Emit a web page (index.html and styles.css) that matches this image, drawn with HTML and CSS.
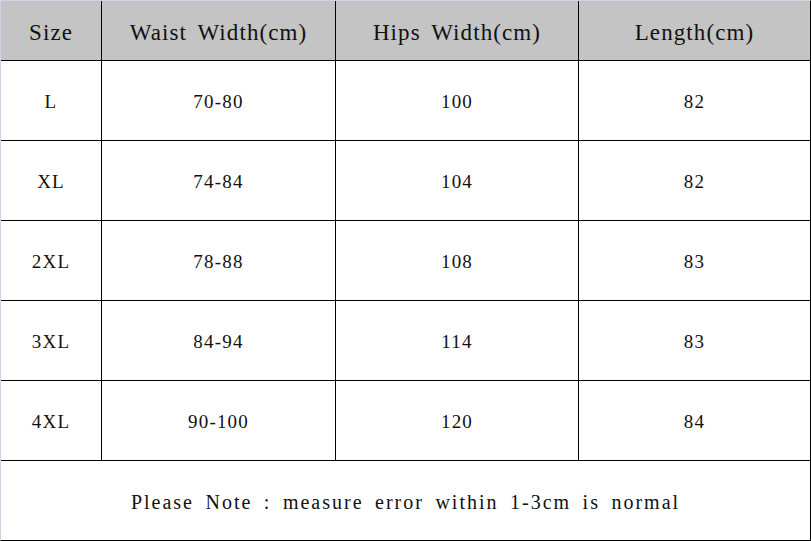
FILE: index.html
```html
<!DOCTYPE html>
<html>
<head>
<meta charset="utf-8">
<link rel="stylesheet" href="styles.css">
</head>
<body>
<div class="chart">
  <div class="cell head">Size</div>
  <div class="cell head">Waist Width(cm)</div>
  <div class="cell head">Hips Width(cm)</div>
  <div class="cell head">Length(cm)</div>

  <div class="cell">L</div><div class="cell">70-80</div><div class="cell">100</div><div class="cell">82</div>
  <div class="cell">XL</div><div class="cell">74-84</div><div class="cell">104</div><div class="cell">82</div>
  <div class="cell">2XL</div><div class="cell">78-88</div><div class="cell">108</div><div class="cell">83</div>
  <div class="cell">3XL</div><div class="cell">84-94</div><div class="cell">114</div><div class="cell">83</div>
  <div class="cell">4XL</div><div class="cell">90-100</div><div class="cell">120</div><div class="cell">84</div>

  <div class="cell note">Please Note : measure error within 1-3cm is normal</div>
</div>
</body>
</html>
```
FILE: styles.css
```css
html, body {
  margin: 0;
  padding: 0;
  background: #ffffff;
}
.chart {
  width: 811px;
  height: 541px;
  box-sizing: border-box;
  display: grid;
  grid-template-columns: 100px 233px 242px 231px;
  grid-template-rows: 59px repeat(5, 79px) 79px;
  gap: 1px;
  background: #000000;
  border-left: 1px solid #d3d3e3;
  border-top: 1px solid #d3d3e3;
  border-right: 1px solid #000000;
  border-bottom: 1px solid #000000;
  font-family: "Liberation Serif", serif;
  color: #111111;
}
.cell {
  background: #ffffff;
  display: flex;
  align-items: center;
  justify-content: center;
  box-sizing: border-box;
  font-size: 19px;
  letter-spacing: 1.2px;
  padding-top: 3px;
}
.head {
  background: #c4c4c4;
  font-size: 23px;
  letter-spacing: 1.1px;
  word-spacing: 4px;
  padding-top: 5px;
}
.note {
  grid-column: 1 / -1;
  font-size: 20px;
  letter-spacing: 2px;
  word-spacing: 4.5px;
  padding-top: 4px;
}
```
